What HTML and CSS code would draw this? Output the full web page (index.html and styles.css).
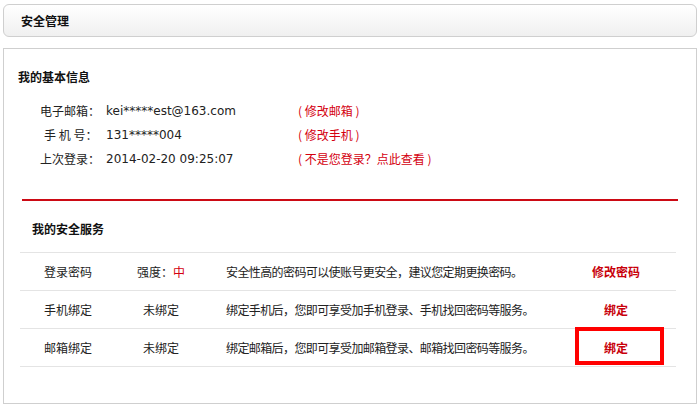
FILE: index.html
```html
<!DOCTYPE html>
<html lang="zh-CN">
<head>
<meta charset="utf-8">
<link rel="stylesheet" href="styles.css">
</head>
<body>
<div class="header">安全管理</div>
<div class="main">
  <h3 class="sec-title">我的基本信息</h3>
  <div class="info">
    <div class="info-row">
      <span class="lbl">电子邮箱：</span>
      <span class="val">kei*****est@163.com</span>
      <a class="lnk">( 修改邮箱 )</a>
    </div>
    <div class="info-row">
      <span class="lbl lbl-sp">手 机 号：</span>
      <span class="val">131*****004</span>
      <a class="lnk">( 修改手机 )</a>
    </div>
    <div class="info-row">
      <span class="lbl">上次登录：</span>
      <span class="val">2014-02-20 09:25:07</span>
      <a class="lnk">( 不是您登录？点此查看 )</a>
    </div>
  </div>
  <div class="divider"></div>
  <h3 class="sec-title sec2">我的安全服务</h3>
  <table class="svc">
    <tr>
      <td class="c1">登录密码</td>
      <td class="c2">强度：<span class="red">中</span></td>
      <td class="c3">安全性高的密码可以使账号更安全，建议您定期更换密码。</td>
      <td class="c4"><a class="act">修改密码</a></td>
    </tr>
    <tr>
      <td class="c1">手机绑定</td>
      <td class="c2">未绑定</td>
      <td class="c3">绑定手机后，您即可享受加手机登录、手机找回密码等服务。</td>
      <td class="c4"><a class="act">绑定</a></td>
    </tr>
    <tr>
      <td class="c1">邮箱绑定</td>
      <td class="c2">未绑定</td>
      <td class="c3">绑定邮箱后，您即可享受加邮箱登录、邮箱找回密码等服务。</td>
      <td class="c4"><a class="act">绑定</a><span class="hl"></span></td>
    </tr>
  </table>
</div>
</body>
</html>
```

FILE: styles.css
```css
html, body {
  margin: 0;
  padding: 0;
  background: #fff;
}
body {
  padding: 4px 3px 0 3px;
  font-family: "DejaVu Sans", "Noto Sans CJK SC", sans-serif;
  font-size: 12px;
  color: #222;
}
.header {
  box-sizing: border-box;
  height: 33px;
  width: 694px;
  border: 1px solid #cfcfcf;
  border-radius: 6px;
  background: linear-gradient(#ffffff, #f0f0f0);
  padding-left: 17px;
  line-height: 31px;
  font-family: "Noto Sans CJK SC", sans-serif;
  font-weight: bold;
  font-size: 12px;
  color: #111;
}
.main {
  box-sizing: border-box;
  margin-top: 11px;
  width: 694px;
  height: 356px;
  border: 1px solid #cfcfcf;
  padding: 0 0 0 14px;
}
.sec-title {
  margin: 0;
  padding-top: 18px;
  height: 20px;
  line-height: 20px;
  font-family: "Noto Sans CJK SC", sans-serif;
  font-size: 12px;
  font-weight: bold;
  color: #111;
}
.info {
  padding-top: 12px;
  padding-left: 22px;
}
.info-row {
  display: flex;
  align-items: center;
  height: 24px;
  line-height: 24px;
  white-space: nowrap;
}
.lbl {
  flex: 0 0 60px;
  font-family: "Noto Sans CJK SC", sans-serif;
  color: #222;
}
.lbl-sp {
  flex-basis: 56px;
  padding-left: 4px;
}
.val {
  flex: 0 0 192px;
  margin-left: 6px;
  color: #222;
}
.lnk {
  font-family: "Noto Sans CJK SC", sans-serif;
  color: #d4000f;
}
.divider {
  margin: 28px 0 0 4px;
  width: 656px;
  height: 2px;
  background: #cc0a14;
}
.sec2 {
  padding-top: 18px;
  padding-left: 14px;
}
.svc {
  margin-top: 13px;
  margin-left: 2px;
  width: 656px;
  border-collapse: collapse;
  font-family: "Noto Sans CJK SC", sans-serif;
  font-size: 12px;
  color: #222;
}
.svc td {
  height: 37px;
  padding: 0;
  border-top: 1px solid #e4e4e4;
  border-bottom: 1px solid #e4e4e4;
  vertical-align: middle;
}
.c1 {
  width: 96px;
  text-align: center;
}
.c2 {
  width: 90px;
  text-align: center;
}
.c3 {
  padding-left: 20px !important;
  text-align: left;
  letter-spacing: -0.6px;
}
.c4 {
  width: 120px;
  text-align: center;
  position: relative;
}
.red {
  color: #d4000f;
}
.act {
  color: #c8000a;
  font-weight: bold;
}
.hl {
  position: absolute;
  left: 19px;
  top: -2px;
  width: 81px;
  height: 30px;
  border: 4px solid #ff0000;
}
```
